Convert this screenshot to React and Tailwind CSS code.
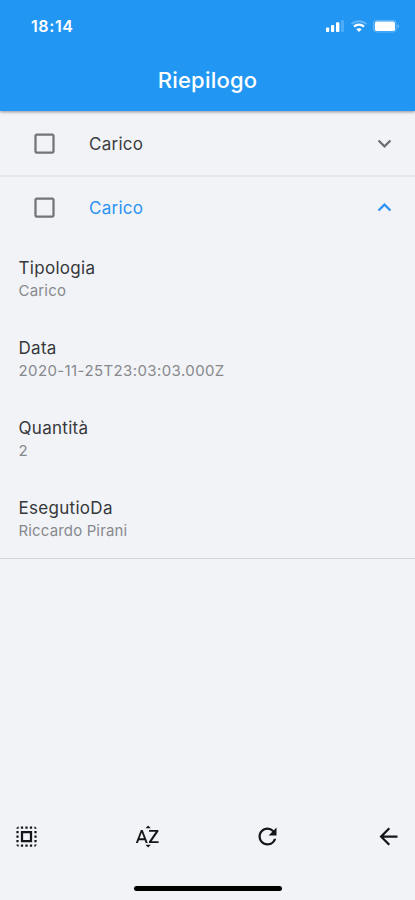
import React from "react";
import {
  MdCheckBoxOutlineBlank,
  MdExpandMore,
  MdExpandLess,
  MdSelectAll,
  MdSortByAlpha,
  MdRefresh,
  MdArrowBack,
} from "react-icons/md";

const details = [
  { label: "Tipologia", value: "Carico", spacing: "tracking-[0.2px]" },
  { label: "Data", value: "2020-11-25T23:03:03.000Z", spacing: "tracking-[0.4px]" },
  { label: "Quantità", value: "2", spacing: "tracking-[0.2px]" },
  { label: "EsegutioDa", value: "Riccardo Pirani", spacing: "tracking-[0.15px]" },
];

function StatusIcons() {
  return (
    <svg width="76" height="16" viewBox="0 0 76 16" fill="#fff">
      <rect x="1" y="9.4" width="3.2" height="4.6" rx="0.9" />
      <rect x="6" y="7" width="3.2" height="7" rx="0.9" />
      <rect x="11" y="4.2" width="3.4" height="9.8" rx="0.9" />
      <rect x="16" y="2" width="3" height="12" rx="0.9" opacity="0.2" />
      <path d="M26.5 6.2A11 11 0 0 1 41.5 6.2" fill="none" stroke="#fff" strokeWidth="1.8" opacity="0.3" />
      <path d="M29 8.6A7.2 7.2 0 0 1 39 8.6" fill="none" stroke="#fff" strokeWidth="2.2" />
      <path d="M31.3 11.3Q34 9.2 36.7 11.3L34 14Z" />
      <rect x="48.4" y="2.4" width="22.8" height="11.6" rx="3" fill="none" stroke="#fff" strokeOpacity="0.3" />
      <rect x="49.8" y="3.6" width="20.2" height="9.4" rx="1.8" />
      <path d="M72.5 6.2Q75.6 8.3 72.5 10.4Z" opacity="0.4" />
    </svg>
  );
}

function PanelHeader({ open }) {
  return (
    <div className={`flex items-center pl-[31px] pr-[17px] ${open ? "h-[60px] text-[#2b93f2]" : "h-16 text-[#3c3d40]"}`}>
      <MdCheckBoxOutlineBlank size={27} className="text-[#737477]" />
      <span className="ml-[31px] flex-1 pt-px text-[17px] leading-6 tracking-[0.25px]">Carico</span>
      {open ? <MdExpandLess size={27} /> : <MdExpandMore size={27} className="text-[#6c6d70]" />}
    </div>
  );
}

export default function App() {
  return (
    <div className="flex h-[900px] w-[415px] flex-col overflow-hidden bg-[#f1f3f7] font-['Inter',sans-serif]">
      <header className="relative h-[111px] shrink-0 bg-[#2296f3] text-white shadow-[0_1px_3px_rgba(0,0,0,0.4)]">
        <div className="flex h-[52px] items-center justify-between pl-[31px] pr-[14px]">
          <span className="text-[16px] font-semibold leading-5 tracking-[0.6px]">18:14</span>
          <StatusIcons />
        </div>
        <h1 className="mt-[12px] text-center text-[22px] font-medium leading-8 tracking-[0.2px]">Riepilogo</h1>
      </header>

      <main className="flex-1">
        <section className="h-[66px] border-b-2 border-[#e5e7eb]">
          <PanelHeader open={false} />
        </section>
        <section className="h-[382px] border-b border-[#d2d4d8]">
          <PanelHeader open />
          <dl className="pl-[18.5px] pt-[19px]">
            {details.map((d) => (
              <div key={d.label} className="h-20">
                <dt className="text-[17px] leading-6 tracking-[0.3px] text-[#37383b]">{d.label}</dt>
                <dd className={`text-[15px] leading-[22px] text-[#88898d] ${d.spacing}`}>{d.value}</dd>
              </div>
            ))}
          </dl>
        </section>
      </main>

      <nav className="flex h-[56px] items-center justify-between px-[13px] text-[#151618]">
        <MdSelectAll size={27} />
        <MdSortByAlpha size={27} />
        <MdRefresh size={27} />
        <MdArrowBack size={27} />
      </nav>
      <div className="flex h-9 shrink-0 justify-center pt-[22px]">
        <div className="h-[5px] w-[148px] rounded-full bg-black" />
      </div>
    </div>
  );
}
